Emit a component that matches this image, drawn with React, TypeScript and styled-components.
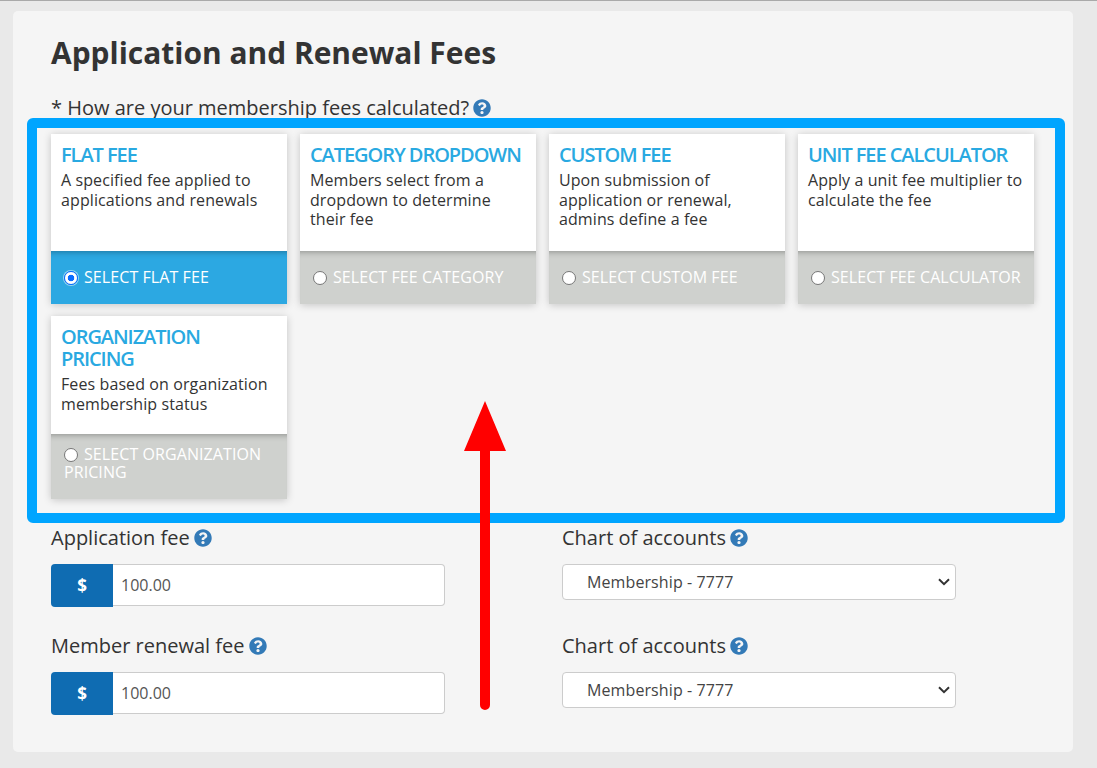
import React from "react";
import styled, { createGlobalStyle } from "styled-components";
import { FaQuestionCircle } from "react-icons/fa";

const Global = createGlobalStyle`
  html, body { margin: 0; padding: 0; height: 100%; background: #e9e9e9; overflow: hidden; }
  body { font-family: "Open Sans", "Liberation Sans", sans-serif; color: #333; }
  * { box-sizing: border-box; }
`;

const Page = styled.div`
  height: 768px;
  border-top: 1px solid #a9a9a9;
  padding: 10px 24px 0 13px;
`;

const Panel = styled.section`
  position: relative;
  height: 741px;
  background: #f5f5f5;
  border-radius: 5px;
  padding: 23px 38px 0;
`;

const Heading = styled.h1`
  margin: 0;
  height: 38px;
  font-size: 29.95px;
  line-height: 38px;
  font-weight: 700;
  color: #333;
`;

const Question = styled.div`
  margin-top: 23px;
  height: 26px;
  display: flex;
  align-items: center;
  gap: 4px;
  font-size: 20px;
  line-height: 26px;
`;

const HelpIcon = styled(FaQuestionCircle)`
  width: 18px;
  height: 18px;
  color: #337ab7;
  flex: none;
`;

const CardGrid = styled.div`
  margin-top: 13px;
  display: grid;
  grid-template-columns: repeat(4, 236.4px);
  column-gap: 12.6px;
  row-gap: 12px;
`;

const Card = styled.article`
  display: flex;
  flex-direction: column;
  box-shadow: 0 1px 8px rgba(0, 0, 0, 0.2);
`;

const CardBody = styled.div`
  min-height: 117px;
  flex: 1;
  background: #fff;
  padding: 10px 10px 20px;
`;

const CardTitle = styled.h3`
  margin: 0 4px 5px 0;
  font-size: 20px;
  line-height: 22px;
  font-weight: 600;
  letter-spacing: -1.06px;
  color: #29a9e1;
  text-transform: uppercase;
`;

const CardText = styled.p`
  margin: 0;
  font-size: 16px;
  letter-spacing: 0.1px;
  line-height: 19.5px;
  color: #333;
`;

const CardFooter = styled.label<{ $selected?: boolean; $wrapped?: boolean }>`
  display: block;
  height: ${(p) => (p.$wrapped ? "65px" : "53px")};
  padding: ${(p) => (p.$wrapped ? "11px" : "17px")} 10px 0 13px;
  background: ${(p) => (p.$selected ? "#2ca8e2" : "#cfd1ce")};
  box-shadow: inset 0 7px 7px -7px rgba(0, 0, 0, 0.4);
  color: #fff;
  font-size: 16px;
  letter-spacing: 0.08px;
  line-height: 18px;
  text-transform: uppercase;
`;

const Radio = styled.input.attrs({ type: "radio" })`
  appearance: none;
  display: inline-block;
  width: 14px;
  height: 14px;
  margin: 0 6px 0 0;
  vertical-align: -2px;
  border: 1.5px solid #767676;
  border-radius: 50%;
  background: #fff;
  &:checked {
    border: 1.5px solid #0a6cff;
    background: radial-gradient(circle, #0a6cff 0 3px, #fff 3.6px);
    box-shadow: 0 0 0 1px rgba(255, 255, 255, 0.5);
  }
`;

const FeeRows = styled.div`
  margin-top: 26px;
  display: grid;
  grid-template-columns: 511px 394px;
  row-gap: 26px;
`;

const Field = styled.div`
  display: flex;
  flex-direction: column;
`;

const FieldLabel = styled.label`
  height: 26px;
  display: flex;
  align-items: center;
  gap: 4px;
  font-size: 20px;
  line-height: 26px;
  margin-bottom: 13px;
`;

const InputGroup = styled.div`
  display: flex;
  width: 394px;
  height: 43px;
`;

const Addon = styled.span`
  width: 62px;
  height: 43px;
  display: flex;
  align-items: center;
  justify-content: center;
  background: #0f6cb2;
  color: #fff;
  font-size: 17px;
  font-weight: 700;
  border-radius: 4px 0 0 4px;
`;

const Input = styled.input`
  flex: 1;
  min-width: 0;
  height: 42px;
  padding: 0 8px;
  border: 1px solid #ccc;
  border-left: 0;
  border-radius: 0 4px 4px 0;
  background: #fff;
  font: 400 16px "Open Sans", sans-serif;
  color: #555;
  outline: none;
`;

const chevron =
  "data:image/svg+xml,%3Csvg xmlns='http://www.w3.org/2000/svg' width='12' height='8' viewBox='0 0 12 8'%3E%3Cpath d='M1 1.2 L6 6.2 L11 1.2' fill='none' stroke='%23333' stroke-width='2'/%3E%3C/svg%3E";

const Select = styled.select`
  appearance: none;
  width: 394px;
  height: 36px;
  padding: 0 0 0 24px;
  border: 1px solid #ccc;
  border-radius: 4px;
  background: #fff url("${chevron}") no-repeat right 5px center;
  font: 400 16px "Open Sans", sans-serif;
  letter-spacing: 0.1px;
  color: #444;
`;

const Frame = styled.div`
  position: absolute;
  left: 14px;
  top: 107px;
  width: 1038px;
  height: 405px;
  border: 10px solid #00a5ff;
  border-radius: 6px;
  pointer-events: none;
`;

const Arrow = styled.svg`
  position: absolute;
  left: 451px;
  top: 390px;
  width: 42px;
  height: 310px;
  pointer-events: none;
`;

const plans = [
  { title: "Flat Fee", text: "A specified fee applied to applications and renewals", action: "Select Flat Fee", selected: true },
  { title: "Category Dropdown", text: "Members select from a dropdown to determine their fee", action: "Select Fee Category" },
  { title: "Custom Fee", text: "Upon submission of application or renewal, admins define a fee", action: "Select Custom Fee" },
  { title: "Unit Fee Calculator", text: "Apply a unit fee multiplier to calculate the fee", action: "Select Fee Calculator" },
  { title: "Organization Pricing", text: "Fees based on organization membership status", action: "Select Organization Pricing", wrapped: true },
];

const fees = ["Application fee", "Member renewal fee"];

export default function App() {
  return (
    <Page>
      <Global />
      <Panel>
        <Heading>Application and Renewal Fees</Heading>
        <Question>
          * How are your membership fees calculated? <HelpIcon />
        </Question>
        <CardGrid>
          {plans.map((p) => (
            <Card key={p.title}>
              <CardBody>
                <CardTitle>{p.title}</CardTitle>
                <CardText>{p.text}</CardText>
              </CardBody>
              <CardFooter $selected={p.selected} $wrapped={p.wrapped}>
                <Radio name="fee" defaultChecked={p.selected} />
                {p.action}
              </CardFooter>
            </Card>
          ))}
        </CardGrid>
        <FeeRows>
          {fees.map((fee) => (
            <React.Fragment key={fee}>
              <Field>
                <FieldLabel>
                  {fee} <HelpIcon />
                </FieldLabel>
                <InputGroup>
                  <Addon>$</Addon>
                  <Input defaultValue="100.00" />
                </InputGroup>
              </Field>
              <Field>
                <FieldLabel>
                  Chart of accounts <HelpIcon />
                </FieldLabel>
                <Select defaultValue="7777">
                  <option value="7777">Membership - 7777</option>
                </Select>
              </Field>
            </React.Fragment>
          ))}
        </FeeRows>
        <Frame />
        <Arrow viewBox="0 0 42 310">
          <path d="M21 0 L42 50 L26 50 L26 304 A5 5 0 0 1 16 304 L16 50 L0 50 Z" fill="#ff0000" />
        </Arrow>
      </Panel>
    </Page>
  );
}
